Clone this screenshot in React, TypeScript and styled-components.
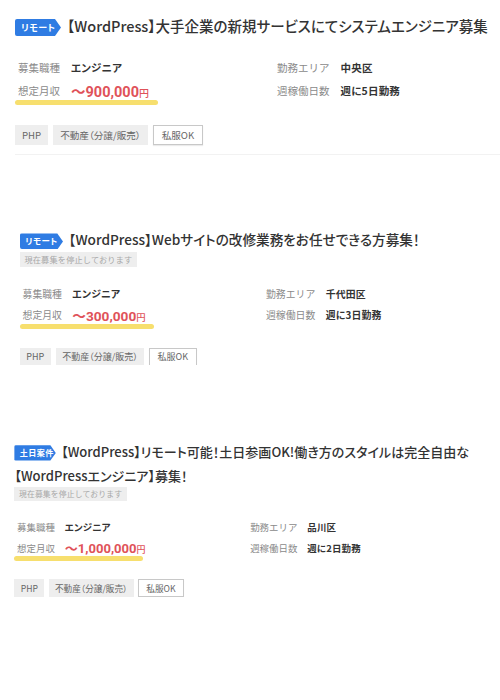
import React from "react";
import styled, { createGlobalStyle } from "styled-components";

const GlobalStyle = createGlobalStyle`
  html, body { margin: 0; padding: 0; background: #fff; }
  body {
    width: 500px;
    height: 700px;
    overflow: hidden;
    font-family: "Noto Sans CJK JP", "Noto Sans", sans-serif;
    color: #333;
  }
`;

const Page = styled.main`
  display: flex;
  flex-direction: column;
`;

const Card = styled.section<{ $zoom: number; $top: number; $left: number; $height?: number }>`
  zoom: ${(p) => p.$zoom};
  margin-top: ${(p) => p.$top}px;
  padding-left: ${(p) => p.$left}px;
  height: ${(p) => (p.$height ? `${p.$height}px` : "auto")};
  overflow: hidden;
  display: flex;
  flex-direction: column;
  align-items: flex-start;
`;

const Title = styled.h2`
  margin: 0;
  font-size: 14.5px;
  font-weight: 500;
  line-height: 26px;
  color: #333;
  font-feature-settings: "palt";
  letter-spacing: 0;
  white-space: nowrap;
`;

const Badge = styled.span`
  display: inline-block;
  vertical-align: 1px;
  width: 46px;
  height: 17px;
  margin-right: 6px;
  padding-left: 6px;
  box-sizing: border-box;
  background: #2f7ce3;
  color: #fff;
  font-size: 9px;
  font-weight: 700;
  line-height: 17px;
  letter-spacing: 0.5px;
  clip-path: polygon(0 0, 40px 0, 46px 50%, 40px 100%, 0 100%);
  border-radius: 2px 0 0 2px;
`;

const Notice = styled.div`
  margin-top: 0;
  padding: 0 5px;
  height: 16px;
  line-height: 16px;
  background: #eeeeee;
  color: #a8a8a8;
  font-size: 8.7px;
  letter-spacing: 0.2px;
`;

const InfoGrid = styled.div`
  margin-top: 17px;
  display: grid;
  grid-template-columns: 259px 240px;
  grid-auto-rows: 23px;
`;

const Cell = styled.div`
  position: relative;
  display: flex;
  align-items: center;
  gap: 11px;
  padding-left: 3px;
`;

const SalaryCell = styled(Cell)`
  &::after {
    content: "";
    position: absolute;
    left: 0;
    bottom: -3px;
    width: 143px;
    height: 5px;
    border-radius: 3px;
    background: #f7df6e;
  }
`;

const Label = styled.span`
  font-size: 10.5px;
  color: #8a8a8a;
  letter-spacing: 0;
  font-weight: 400;
`;

const Value = styled.span`
  font-size: 10.5px;
  font-weight: 700;
  color: #333;
  letter-spacing: 0.2px;
  font-feature-settings: "palt";
`;

const Salary = styled.span`
  position: relative;
  z-index: 1;
  font-family: "Roboto", "Noto Sans CJK JP", sans-serif;
  font-size: 14.5px;
  font-weight: 700;
  color: #df5259;
  letter-spacing: 0;
`;

const Yen = styled.span`
  font-family: "Noto Sans CJK JP", sans-serif;
  font-size: 10px;
  font-weight: 500;
`;

const Tags = styled.div`
  margin-top: 23px;
  display: flex;
  gap: 5px;
`;

const Tag = styled.span<{ $outline?: boolean }>`
  height: 20px;
  line-height: ${(p) => (p.$outline ? "18px" : "20px")};
  padding: 0 ${(p) => (p.$outline ? "8px" : "7px")};
  font-size: 9.6px;
  color: #666;
  letter-spacing: 0;
  font-feature-settings: "palt";
  background: ${(p) => (p.$outline ? "#fff" : "#eeeeee")};
  border: ${(p) => (p.$outline ? "1px solid #c8c8c8" : "none")};
  box-sizing: border-box;
  box-shadow: ${(p) => (p.$outline ? "0 1px 1px rgba(0,0,0,0.08)" : "none")};
`;

const Divider = styled.hr`
  align-self: stretch;
  margin: 9px 0 0;
  border: none;
  border-top: 1px solid #f2f2f2;
`;

type Job = {
  badge: string;
  title: React.ReactNode;
  stopped: boolean;
  area: string;
  salary: string;
  days: string;
  zoom: number;
  top: number;
  left: number;
  height?: number;
  divider?: boolean;
};

const jobs: Job[] = [
  {
    badge: "リモート",
    title: "【WordPress】大手企業の新規サービスにてシステムエンジニア募集",
    stopped: false,
    area: "中央区",
    salary: "～900,000",
    days: "週に5日勤務",
    zoom: 1,
    top: 13,
    left: 15,
    divider: true,
  },
  {
    badge: "リモート",
    title: "【WordPress】Webサイトの改修業務をお任せできる方募集！",
    stopped: true,
    area: "千代田区",
    salary: "～300,000",
    days: "週に3日勤務",
    zoom: 0.94,
    top: 77,
    left: 21,
    height: 146,
  },
  {
    badge: "土日案件",
    title: (
      <>
        【WordPress】リモート可能！土日参画OK!働き方のスタイルは完全自由な
        <br />
        【WordPressエンジニア】募集！
      </>
    ),
    stopped: true,
    area: "品川区",
    salary: "～1,000,000",
    days: "週に2日勤務",
    zoom: 0.9,
    top: 84,
    left: 16,
  },
];

export default function App() {
  return (
    <>
      <GlobalStyle />
      <Page>
        {jobs.map((job, i) => (
          <Card key={i} $zoom={job.zoom} $top={job.top} $left={job.left} $height={job.height}>
            <Title>
              <Badge>{job.badge}</Badge>
              {job.title}
            </Title>
            {job.stopped && <Notice>現在募集を停止しております</Notice>}
            <InfoGrid>
              <Cell>
                <Label>募集職種</Label>
                <Value>エンジニア</Value>
              </Cell>
              <Cell>
                <Label>勤務エリア</Label>
                <Value>{job.area}</Value>
              </Cell>
              <SalaryCell>
                <Label>想定月収</Label>
                <Salary>
                  {job.salary}
                  <Yen>円</Yen>
                </Salary>
              </SalaryCell>
              <Cell>
                <Label>週稼働日数</Label>
                <Value>{job.days}</Value>
              </Cell>
            </InfoGrid>
            <Tags>
              <Tag>PHP</Tag>
              <Tag>不動産（分譲/販売）</Tag>
              <Tag $outline>私服OK</Tag>
            </Tags>
            {job.divider && <Divider />}
          </Card>
        ))}
      </Page>
    </>
  );
}
